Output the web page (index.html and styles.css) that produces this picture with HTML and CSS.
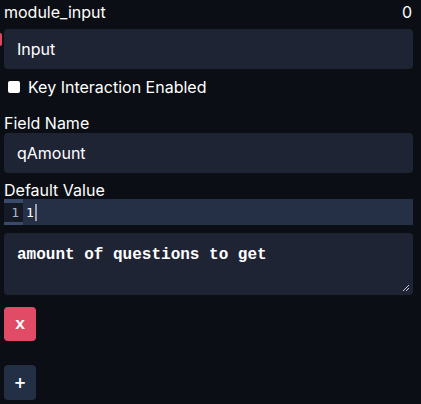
FILE: index.html
```html
<!DOCTYPE html>
<html>
<head>
<meta charset="utf-8">
<link rel="stylesheet" href="styles.css">
</head>
<body>
<div class="marker"></div>
<div class="panel">
  <div class="header">
    <span class="title">module_input</span>
    <span class="count">0</span>
  </div>
  <div class="field">Input</div>
  <label class="check"><span class="box"></span>Key Interaction Enabled</label>
  <div class="label">Field Name</div>
  <div class="field">qAmount</div>
  <div class="label label-dv">Default Value</div>
  <div class="editor">
    <div class="gutter"><span>1</span></div>
    <div class="code"><span>1</span><span class="cursor"></span></div>
  </div>
  <div class="textarea">amount of questions to get
    <svg class="grip" width="8" height="8" viewBox="0 0 8 8"><path d="M7 1 L1 7 M7 4 L4 7" stroke="#c8ccd6" stroke-width="1"/></svg>
  </div>
  <button class="btn btn-del">x</button>
  <button class="btn btn-add">+</button>
</div>
</body>
</html>
```
FILE: styles.css
```css
html, body {
  margin: 0;
  background: #0b0e14;
  color: #ffffff;
  font-family: Inter, "Noto Sans", sans-serif;
  font-size: 16px;
}
body {
  position: relative;
  overflow: hidden;
  height: 404px;
}
.marker {
  position: absolute;
  left: -2px;
  top: 33px;
  width: 4px;
  height: 13px;
  background: #e0455f;
  border-radius: 2px;
}
.panel {
  padding: 2px 8px 0 4px;
  display: flex;
  flex-direction: column;
  align-items: stretch;
}
.header {
  display: flex;
  justify-content: space-between;
  height: 20px;
  line-height: 20px;
  padding-right: 1px;
}
.field {
  margin-top: 7px;
  height: 40px;
  line-height: 40px;
  background: #1f2435;
  border-radius: 4px;
  padding-left: 13px;
}
.check {
  display: flex;
  align-items: center;
  height: 20px;
  margin-top: 8px;
  padding-left: 4px;
}
.check .box {
  width: 12px;
  height: 12px;
  background: #ffffff;
  border-radius: 2px;
  margin-right: 8px;
}
.label {
  margin-top: 16px;
  height: 20px;
  line-height: 20px;
}
.label + .field {
  margin-top: 0;
}
.label-dv {
  margin-top: 8px;
  height: 18px;
  line-height: 18px;
}
.editor {
  height: 26px;
  background: #252f45;
  display: flex;
  font-family: "DejaVu Sans Mono", monospace;
  font-size: 13px;
}
.gutter {
  width: 19px;
  background: #141a26;
  border-top: 4px solid #3a4a6b;
  border-bottom: 3px solid #3a4a6b;
  box-sizing: border-box;
  display: flex;
  align-items: center;
  justify-content: flex-end;
  padding-right: 4px;
  color: #a9b4c8;
}
.code {
  display: flex;
  align-items: center;
  padding-left: 3px;
}
.cursor {
  display: inline-block;
  width: 2px;
  height: 17px;
  background: #9aa2b3;
  margin-left: 1px;
}
.textarea {
  position: relative;
  margin-top: 8px;
  height: 62px;
  box-sizing: border-box;
  background: #1f2435;
  border-radius: 4px;
  padding: 12px 13px;
  font-family: "Courier New", "Nimbus Mono PS", "FreeMono", "Liberation Mono", monospace;
  font-weight: bold;
  font-size: 16px;
  line-height: 20px;
}
.grip {
  position: absolute;
  right: 3px;
  bottom: 3px;
}
.btn {
  width: 32px;
  height: 34px;
  border: none;
  border-radius: 4px;
  color: #fff;
  font-weight: bold;
  padding: 0;
  align-self: flex-start;
}
.btn-del {
  margin-top: 12px;
  background: #e14b66;
  font-family: "Liberation Mono", monospace;
  font-size: 17px;
}
.btn-add {
  margin-top: 24px;
  height: 35px;
  background: #232f45;
  font-family: "DejaVu Sans", sans-serif;
  font-size: 15px;
}
```
